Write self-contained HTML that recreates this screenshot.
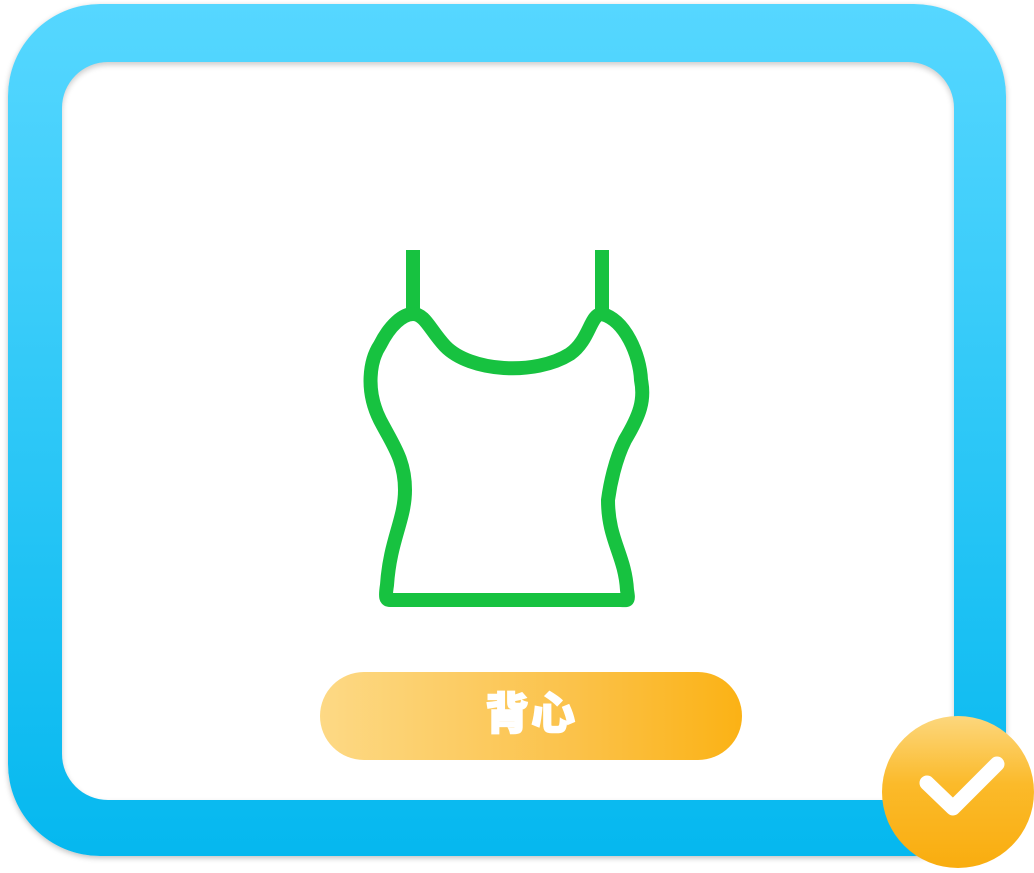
<!DOCTYPE html><html><head><style>
body{margin:0;width:1034px;height:868px;background:#fff;position:relative;overflow:hidden;font-family:"Liberation Sans","Noto Sans CJK SC",sans-serif}
.outer{position:absolute;left:8px;top:4px;width:998px;height:852px;border-radius:92px;background:linear-gradient(#56d7ff,#05b8ef);box-shadow:0 2px 6px rgba(0,0,0,.25)}
.inner{position:absolute;left:62px;top:62px;width:892px;height:738px;border-radius:46px;background:#fff;box-shadow:inset 0 3px 6px rgba(0,0,0,.2)}
.pill{position:absolute;left:320px;top:672px;width:422px;height:88px;border-radius:44px;background:linear-gradient(90deg,#fdd985,#fbc24a 60%,#fbb215);color:#fff;font-size:44px;font-weight:900;text-align:center;line-height:86px;letter-spacing:2px;-webkit-text-stroke:1.5px #fff}
.chk{position:absolute;left:882px;top:716px;width:152px;height:152px;border-radius:50%;background:linear-gradient(#fcd77d,#fbba2a 45%,#f9ad0f)}
</style></head><body>
<div class="outer"></div><div class="inner"></div>
<svg style="position:absolute;left:0;top:0" width="1034" height="868">
<g fill="none" stroke="#17c240" stroke-width="14" stroke-linejoin="round" stroke-linecap="round">
<path d="M413 250V312M602 250V312" stroke-linecap="butt"/>
<path d="M413 314C425 314 430 330 445 346C470 372 535 376 570 354C590 340 590 314 602 314C625 320 640 355 641 380C645 400 640 415 625 440C615 460 610 485 608 500C608 540 625 555 627 590C629 602 628 600 620 600H390C386 600 385 598 387 585C390 540 405 520 405 490C405 460 393 445 380 420C365 390 370 360 380 345C390 325 403 314 413 314Z"/>
</g></svg>
<div class="pill">背心</div>
<div class="chk"><svg width="152" height="152"><path d="M45 67L71 92L115 48" fill="none" stroke="#fff" stroke-width="15" stroke-linecap="round" stroke-linejoin="round"/></svg></div>
</body></html>
